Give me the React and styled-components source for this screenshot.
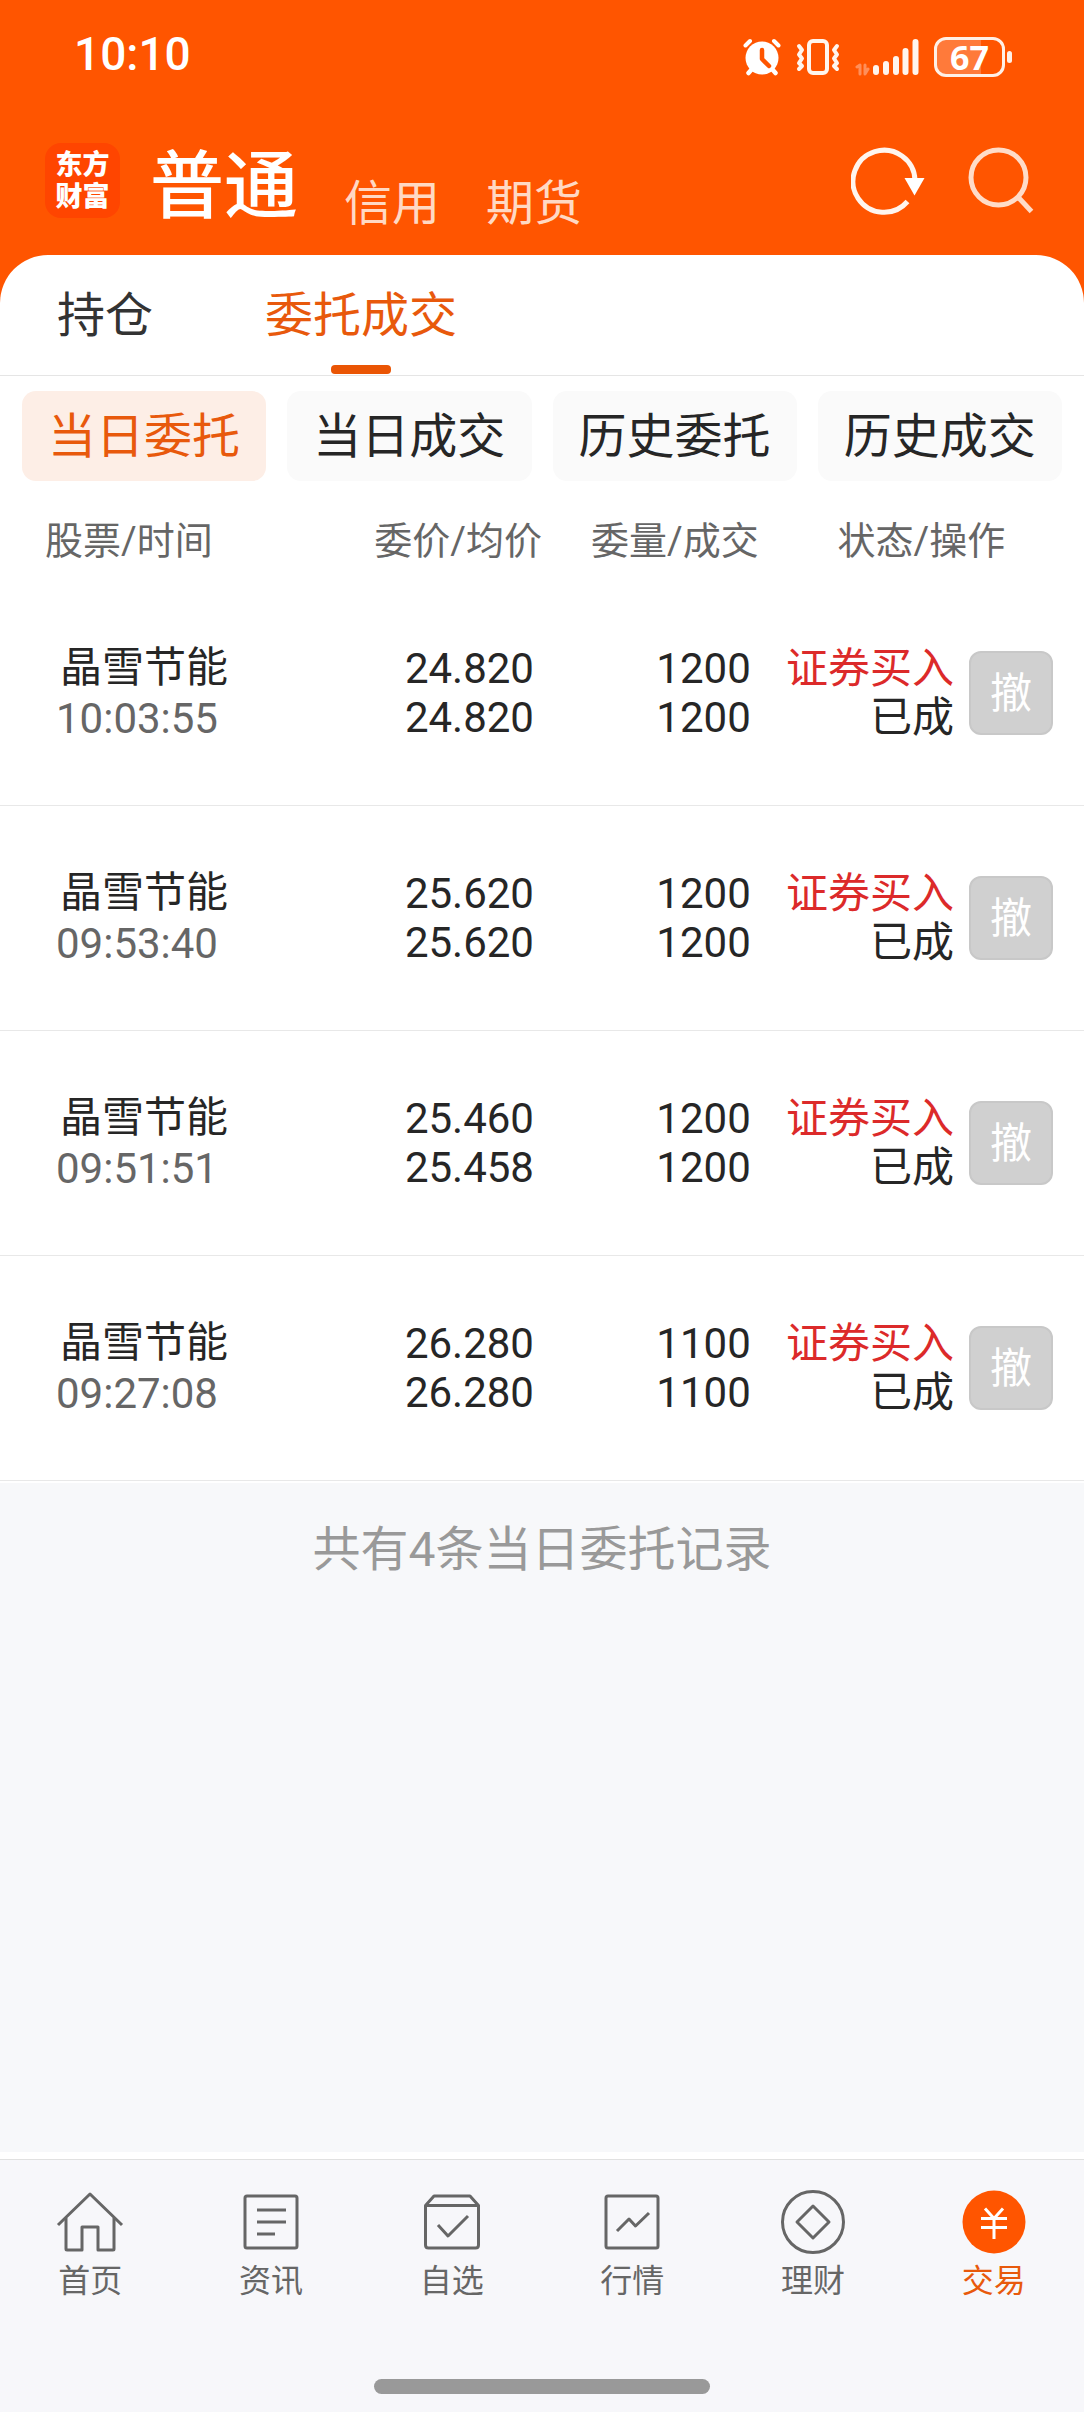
import React, { useState } from 'react';
import styled, { createGlobalStyle, css } from 'styled-components';

const GlobalStyle = createGlobalStyle`
  * {
    box-sizing: border-box;
  }
  body {
    margin: 0;
    background: #f7f8fa;
    font-family: Roboto, 'Noto Sans CJK SC', sans-serif;
    color: #262626;
  }
  button {
    margin: 0;
    padding: 0;
    border: 0;
    background: none;
    font: inherit;
    color: inherit;
    cursor: pointer;
  }
  svg {
    display: block;
  }
`;

const Shell = styled.div`
  display: flex;
  flex-direction: column;
  min-height: 100vh;
  background: #ff5500;
`;

const StatusBar = styled.div`
  display: flex;
  align-items: center;
  justify-content: space-between;
  height: 108px;
  padding: 0 72px 0 74px;
  color: #fff;
`;

const Clock = styled.span`
  font-size: 46px;
  font-weight: 500;
  line-height: 54px;
`;

const StatusIcons = styled.div`
  display: flex;
  align-items: center;
  gap: 15px;
  padding-top: 6px;
`;

const Battery = styled.div`
  display: flex;
  align-items: center;
  gap: 2px;
  .cell {
    display: flex;
    align-items: center;
    justify-content: center;
    width: 71px;
    height: 40px;
    border: 3px solid #fff0e6;
    border-radius: 12px;
    background: linear-gradient(90deg, #ff7a3a 67%, transparent 67%);
    font-family: 'Open Sans', sans-serif;
    font-size: 34px;
    font-weight: 700;
    line-height: 34px;
  }
  .tip {
    width: 5px;
    height: 12px;
    border-radius: 3px;
    background: #fff0e6;
  }
`;

const Header = styled.header`
  display: flex;
  align-items: flex-start;
  height: 147px;
  padding: 35px 45px 0;
  color: #fff;
`;

const Logo = styled.div`
  display: flex;
  align-items: center;
  justify-content: center;
  width: 75px;
  height: 75px;
  border-radius: 16px;
  background: #ff4500;
  font-size: 27px;
  font-weight: 900;
  line-height: 32px;
  text-align: center;
`;

const Accounts = styled.nav`
  display: flex;
  align-items: flex-end;
  flex: 1;
  gap: 46px;
  height: 85px;
  padding-left: 30px;
`;

const Account = styled.button`
  font-size: 48px;
  line-height: 48px;
  color: #ffd9c4;
  ${({ $active }) =>
    $active &&
    css`
      padding-bottom: 4px;
      font-size: 74px;
      font-weight: 500;
      line-height: 74px;
      color: #fff;
    `}
`;

const Tools = styled.div`
  display: flex;
  gap: 40px;
`;

const Sheet = styled.main`
  padding-bottom: 2px;
  border-radius: 48px 48px 0 0;
  background: #fff;
`;

const Tabs = styled.nav`
  display: flex;
  gap: 112px;
  height: 121px;
  padding: 0 57px;
  border-bottom: 1px solid #e5e5e5;
`;

const Tab = styled.button`
  display: flex;
  flex-direction: column;
  align-items: center;
  justify-content: space-between;
  padding-top: 27px;
  font-size: 48px;
  line-height: 68px;
  color: ${({ $active }) => ($active ? '#e8590c' : '#333')};
  &::after {
    content: '';
    width: 60px;
    height: 9px;
    margin-bottom: 1px;
    border-radius: 4px;
    background: ${({ $active }) => ($active ? '#ea5504' : 'transparent')};
  }
`;

const Filters = styled.div`
  display: grid;
  grid-template-columns: repeat(4, 1fr);
  gap: 21px;
  padding: 15px 22px 0;
`;

const Filter = styled.button`
  height: 90px;
  padding-top: 2px;
  border-radius: 14px;
  background: ${({ $active }) => ($active ? '#fdeee6' : '#fafafa')};
  font-size: 48px;
  line-height: 68px;
  color: ${({ $active }) => ($active ? '#e8590c' : '#262626')};
`;

const Orders = styled.table`
  width: 100%;
  table-layout: fixed;
  border-collapse: separate;
  border-spacing: 0;
  font-size: 42px;
  line-height: 49px;
  th {
    height: 100px;
    padding: 20px 0 0;
    font-size: 38px;
    font-weight: 400;
    color: #666;
  }
  td {
    height: 225px;
    padding: 0;
    border-bottom: 1px solid #e8e8e8;
  }
  th.stock {
    padding-left: 45px;
    text-align: left;
  }
  .num {
    text-align: right;
  }
  td.num {
    padding-right: 8px;
  }
`;

const StockCell = styled.td`
  && {
    padding-left: 56px;
  }
  line-height: 51px;
  .name {
    padding-left: 4px;
  }
  .time {
    color: #666;
  }
`;

const StateCell = styled.td`
  text-align: right;
  white-space: nowrap;
  .side {
    color: #dc2a2a;
  }
`;

const ActionCell = styled.td`
  && {
    padding-left: 15px;
  }
`;

const CancelButton = styled.button`
  display: block;
  width: 84px;
  height: 84px;
  border: 2px solid #c8c8c8;
  border-radius: 12px;
  background: #d0d0d0;
  color: #fff;
`;

const Summary = styled.div`
  flex: 1;
  padding-top: 33px;
  border-bottom: 7px solid #fff;
  background: #f7f8fa;
  font-size: 48px;
  line-height: 68px;
  text-align: center;
  color: #999;
`;

const BottomNav = styled.nav`
  display: grid;
  grid-template-columns: repeat(6, 1fr);
  height: 220px;
  padding-top: 28px;
  border-top: 1px solid #e1e1e1;
  background: #f7f7fa;
`;

const NavItem = styled.a`
  display: flex;
  flex-direction: column;
  align-items: center;
  gap: 4px;
  font-size: 32px;
  line-height: 42px;
  text-decoration: none;
  color: ${({ $active }) => ($active ? '#e8590c' : '#666')};
`;

const GestureArea = styled.div`
  display: flex;
  justify-content: center;
  height: 33px;
  background: #f7f7fa;
  &::after {
    content: '';
    width: 31%;
    height: 15px;
    border-radius: 8px;
    background: #999;
  }
`;

const AlarmIcon = () => (
  <svg width='38' height='38' viewBox='0 0 38 38' fill='none' strokeLinecap='round'>
    <path d='M2.5 7.5 7 3M35.5 7.5 31 3' stroke='#fff' strokeWidth='4' />
    <path d='M9 31 5.5 35M29 31l3.5 4' stroke='#fff' strokeWidth='4.5' />
    <circle cx='19' cy='20' r='16.5' fill='#fff' />
    <path d='M19 12v9l7 7' stroke='#ff5500' strokeWidth='4.5' strokeLinejoin='round' />
  </svg>
);

const VibrateIcon = () => (
  <svg width='44' height='38' viewBox='0 0 44 38' fill='none' stroke='#fff5ee' strokeLinecap='round' strokeLinejoin='round'>
    <rect x='13' y='3' width='18' height='32' rx='4' strokeWidth='4' />
    <path d='m3 8 3 4-3 4.5 3 4-3 4.5 3 3-3 3' strokeWidth='4' />
    <path d='m41 8-3 4 3 4.5-3 4 3 4.5-3 3 3 3' strokeWidth='4' />
  </svg>
);

const SignalIcon = () => (
  <svg width='64' height='38' viewBox='0 0 64 38' fill='none' strokeLinecap='round'>
    <path d='m2 29 3-2v9M10 27v9l3-5' stroke='#ff8f5a' strokeWidth='3' strokeLinejoin='round' />
    <path d='M21 30v4M31 26v8M41 21v13M50.5 13v21M60.5 4v30' stroke='#fff5ee' strokeWidth='6' />
  </svg>
);

const RefreshIcon = () => (
  <svg width='76' height='76' viewBox='0 0 76 76' fill='none'>
    <path d='M56.5 58.500A31 31 0 1 1 64 37.500' stroke='#fff5ee' strokeWidth='5' />
    <path d='M53.500 35h20L63.500 52.500z' fill='#fff' />
  </svg>
);

const SearchIcon = () => (
  <svg width='72' height='76' viewBox='0 0 72 76' fill='none' stroke='#ffdcc8' strokeWidth='5'>
    <circle cx='31.5' cy='34.5' r='27.5' />
    <path d='m51 54 13.5 14.5' />
  </svg>
);

const HomeIcon = () => (
  <>
    <path d='m2 37 32-31 32 31' />
    <path d='M10 30v31q0 1 1 1h15V39h16v23h15q1 0 1-1V30' />
  </>
);

const NewsIcon = () => (
  <>
    <rect x='8' y='8' width='52' height='52' rx='2' />
    <path d='M20 22h29M20 34h29M20 46h18' />
  </>
);

const PicksIcon = () => (
  <>
    <path d='M7.5 17.5 16 8h36l8.5 9.5V57q0 3-3 3h-47q-3 0-3-3V17.5h53' />
    <path d='m20 37 10 11 20-20' />
  </>
);

const MarketIcon = () => (
  <>
    <rect x='8' y='8' width='52' height='52' rx='2' />
    <path d='m19 43 12-12 6.5 7L51 25' />
  </>
);

const WealthIcon = () => (
  <>
    <circle cx='34' cy='34' r='30.5' />
    <path d='m34 18 16 16-16 16-16-16z' />
  </>
);

const TradeIcon = () => (
  <>
    <circle cx='34' cy='34' r='31.5' fill='#ff5500' stroke='none' />
    <path d='m25 20.5 9 10 9-10M21 30.5h26M21 39.5h26M34 30.5V51' stroke='#fff' />
  </>
);

const accounts = ['普通', '信用', '期货'];
const tabs = ['持仓', '委托成交'];
const filters = ['当日委托', '当日成交', '历史委托', '历史成交'];

const orders = [
  { name: '晶雪节能', time: '10:03:55', price: '24.820', avg: '24.820', qty: 1200, filled: 1200 },
  { name: '晶雪节能', time: '09:53:40', price: '25.620', avg: '25.620', qty: 1200, filled: 1200 },
  { name: '晶雪节能', time: '09:51:51', price: '25.460', avg: '25.458', qty: 1200, filled: 1200 },
  { name: '晶雪节能', time: '09:27:08', price: '26.280', avg: '26.280', qty: 1100, filled: 1100 },
];

const navItems = [
  { label: '首页', icon: HomeIcon },
  { label: '资讯', icon: NewsIcon },
  { label: '自选', icon: PicksIcon },
  { label: '行情', icon: MarketIcon },
  { label: '理财', icon: WealthIcon },
  { label: '交易', icon: TradeIcon },
];

const OrderRow = ({ order }) => (
  <tr>
    <StockCell>
      <div className='name'>{order.name}</div>
      <div className='time'>{order.time}</div>
    </StockCell>
    <td className='num'>
      <div>{order.price}</div>
      <div>{order.avg}</div>
    </td>
    <td className='num'>
      <div>{order.qty}</div>
      <div>{order.filled}</div>
    </td>
    <StateCell>
      <div className='side'>证券买入</div>
      <div>已成</div>
    </StateCell>
    <ActionCell>
      <CancelButton type='button'>撤</CancelButton>
    </ActionCell>
  </tr>
);

const App = () => {
  const [account, setAccount] = useState('普通');
  const [tab, setTab] = useState('委托成交');
  const [filter, setFilter] = useState('当日委托');

  return (
    <Shell>
      <GlobalStyle />
      <StatusBar>
        <Clock>10:10</Clock>
        <StatusIcons>
          <AlarmIcon />
          <VibrateIcon />
          <SignalIcon />
          <Battery>
            <div className='cell'>67</div>
            <div className='tip' />
          </Battery>
        </StatusIcons>
      </StatusBar>
      <Header>
        <Logo>
          东方
          <br />
          财富
        </Logo>
        <Accounts>
          {accounts.map((item) => (
            <Account key={item} type='button' $active={item === account} onClick={() => setAccount(item)}>
              {item}
            </Account>
          ))}
        </Accounts>
        <Tools>
          <button type='button' aria-label='刷新'>
            <RefreshIcon />
          </button>
          <button type='button' aria-label='搜索'>
            <SearchIcon />
          </button>
        </Tools>
      </Header>
      <Sheet>
        <Tabs>
          {tabs.map((item) => (
            <Tab key={item} type='button' $active={item === tab} onClick={() => setTab(item)}>
              {item}
            </Tab>
          ))}
        </Tabs>
        <Filters>
          {filters.map((item) => (
            <Filter key={item} type='button' $active={item === filter} onClick={() => setFilter(item)}>
              {item}
            </Filter>
          ))}
        </Filters>
        <Orders>
          <colgroup>
            <col width='30%' />
            <col width='20%' />
            <col width='20%' />
            <col width='18%' />
            <col width='12%' />
          </colgroup>
          <thead>
            <tr>
              <th className='stock'>股票/时间</th>
              <th className='num'>委价/均价</th>
              <th className='num'>委量/成交</th>
              <th colSpan={2}>状态/操作</th>
            </tr>
          </thead>
          <tbody>
            {orders.map((order) => (
              <OrderRow key={order.time} order={order} />
            ))}
          </tbody>
        </Orders>
      </Sheet>
      <Summary>共有{orders.length}条当日委托记录</Summary>
      <BottomNav>
        {navItems.map(({ label, icon: Icon }) => (
          <NavItem key={label} href='#' $active={label === '交易'}>
            <svg width='68' height='68' viewBox='0 0 68 68' fill='none' stroke='currentColor' strokeWidth='3' strokeLinejoin='round'>
              <Icon />
            </svg>
            {label}
          </NavItem>
        ))}
      </BottomNav>
      <GestureArea />
    </Shell>
  );
};

export default App;
